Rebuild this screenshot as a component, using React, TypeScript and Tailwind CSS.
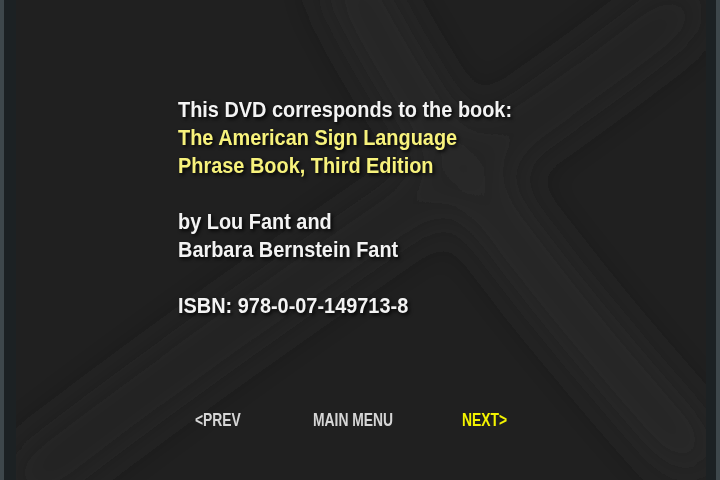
import React from "react";

const Backdrop: React.FC = () => (
  <svg
    className="absolute inset-0 h-full w-full"
    viewBox="0 0 720 480"
    preserveAspectRatio="none"
  >
    <defs>
      <filter id="soft" x="-30%" y="-30%" width="160%" height="160%">
        <feGaussianBlur stdDeviation="24" />
      </filter>
    </defs>
    <g filter="url(#soft)" fill="none" strokeLinecap="round">
      <path d="M350 -20 C 420 120, 520 260, 690 450" stroke="#292929" strokeWidth="50" />
      <path d="M680 10 C 520 140, 300 270, 30 480" stroke="#272727" strokeWidth="44" />
    </g>
  </svg>
);

const App: React.FC = () => {
  const shadow = "[text-shadow:2px_2px_4px_rgba(0,0,0,0.9)]";
  return (
    <div className="relative w-[720px] h-[480px] overflow-hidden bg-[#202020] font-['Liberation_Sans',Arial,sans-serif]">
      <Backdrop />
      <div className="absolute inset-y-0 left-0 flex">
        <div className="w-[4px] bg-[#3e474b]" />
        <div className="w-[12px] bg-[#1c2123]" />
      </div>
      <div className="absolute inset-y-0 right-0 flex">
        <div className="w-[10px] bg-[#1c2123]" />
        <div className="w-[4px] bg-[#3e474b]" />
      </div>

      <div className="relative flex flex-col h-full">
        <div className="pl-[178px] pt-[96px]">
          <div className={`origin-left scale-x-[0.905] text-[22px] leading-[28px] font-bold ${shadow}`}>
            <p className="text-[#f3f3f3]">This DVD corresponds to the book:</p>
            <p className="text-[#f7f27c]">The American Sign Language</p>
            <p className="text-[#f7f27c]">Phrase Book, Third Edition</p>
            <p className="h-[28px]" />
            <p className="text-[#f3f3f3]">by Lou Fant and</p>
            <p className="text-[#f3f3f3]">Barbara Bernstein Fant</p>
            <p className="h-[28px]" />
            <p className="text-[#f3f3f3]">ISBN: 978-0-07-149713-8</p>
          </div>
        </div>

        <div className="flex items-center pl-[195px] mt-[88px] text-[19px] leading-[24px] font-bold">
          <span className="w-[118px] text-[#d6d6d6]">
            <span className="inline-block origin-left scale-x-[0.73]">&lt;PREV</span>
          </span>
          <span className="w-[149px] text-[#d6d6d6]">
            <span className="inline-block origin-left scale-x-[0.73]">MAIN MENU</span>
          </span>
          <span className="text-[#f4f400]">
            <span className="inline-block origin-left scale-x-[0.73]">NEXT&gt;</span>
          </span>
        </div>
      </div>
    </div>
  );
};

export default App;
